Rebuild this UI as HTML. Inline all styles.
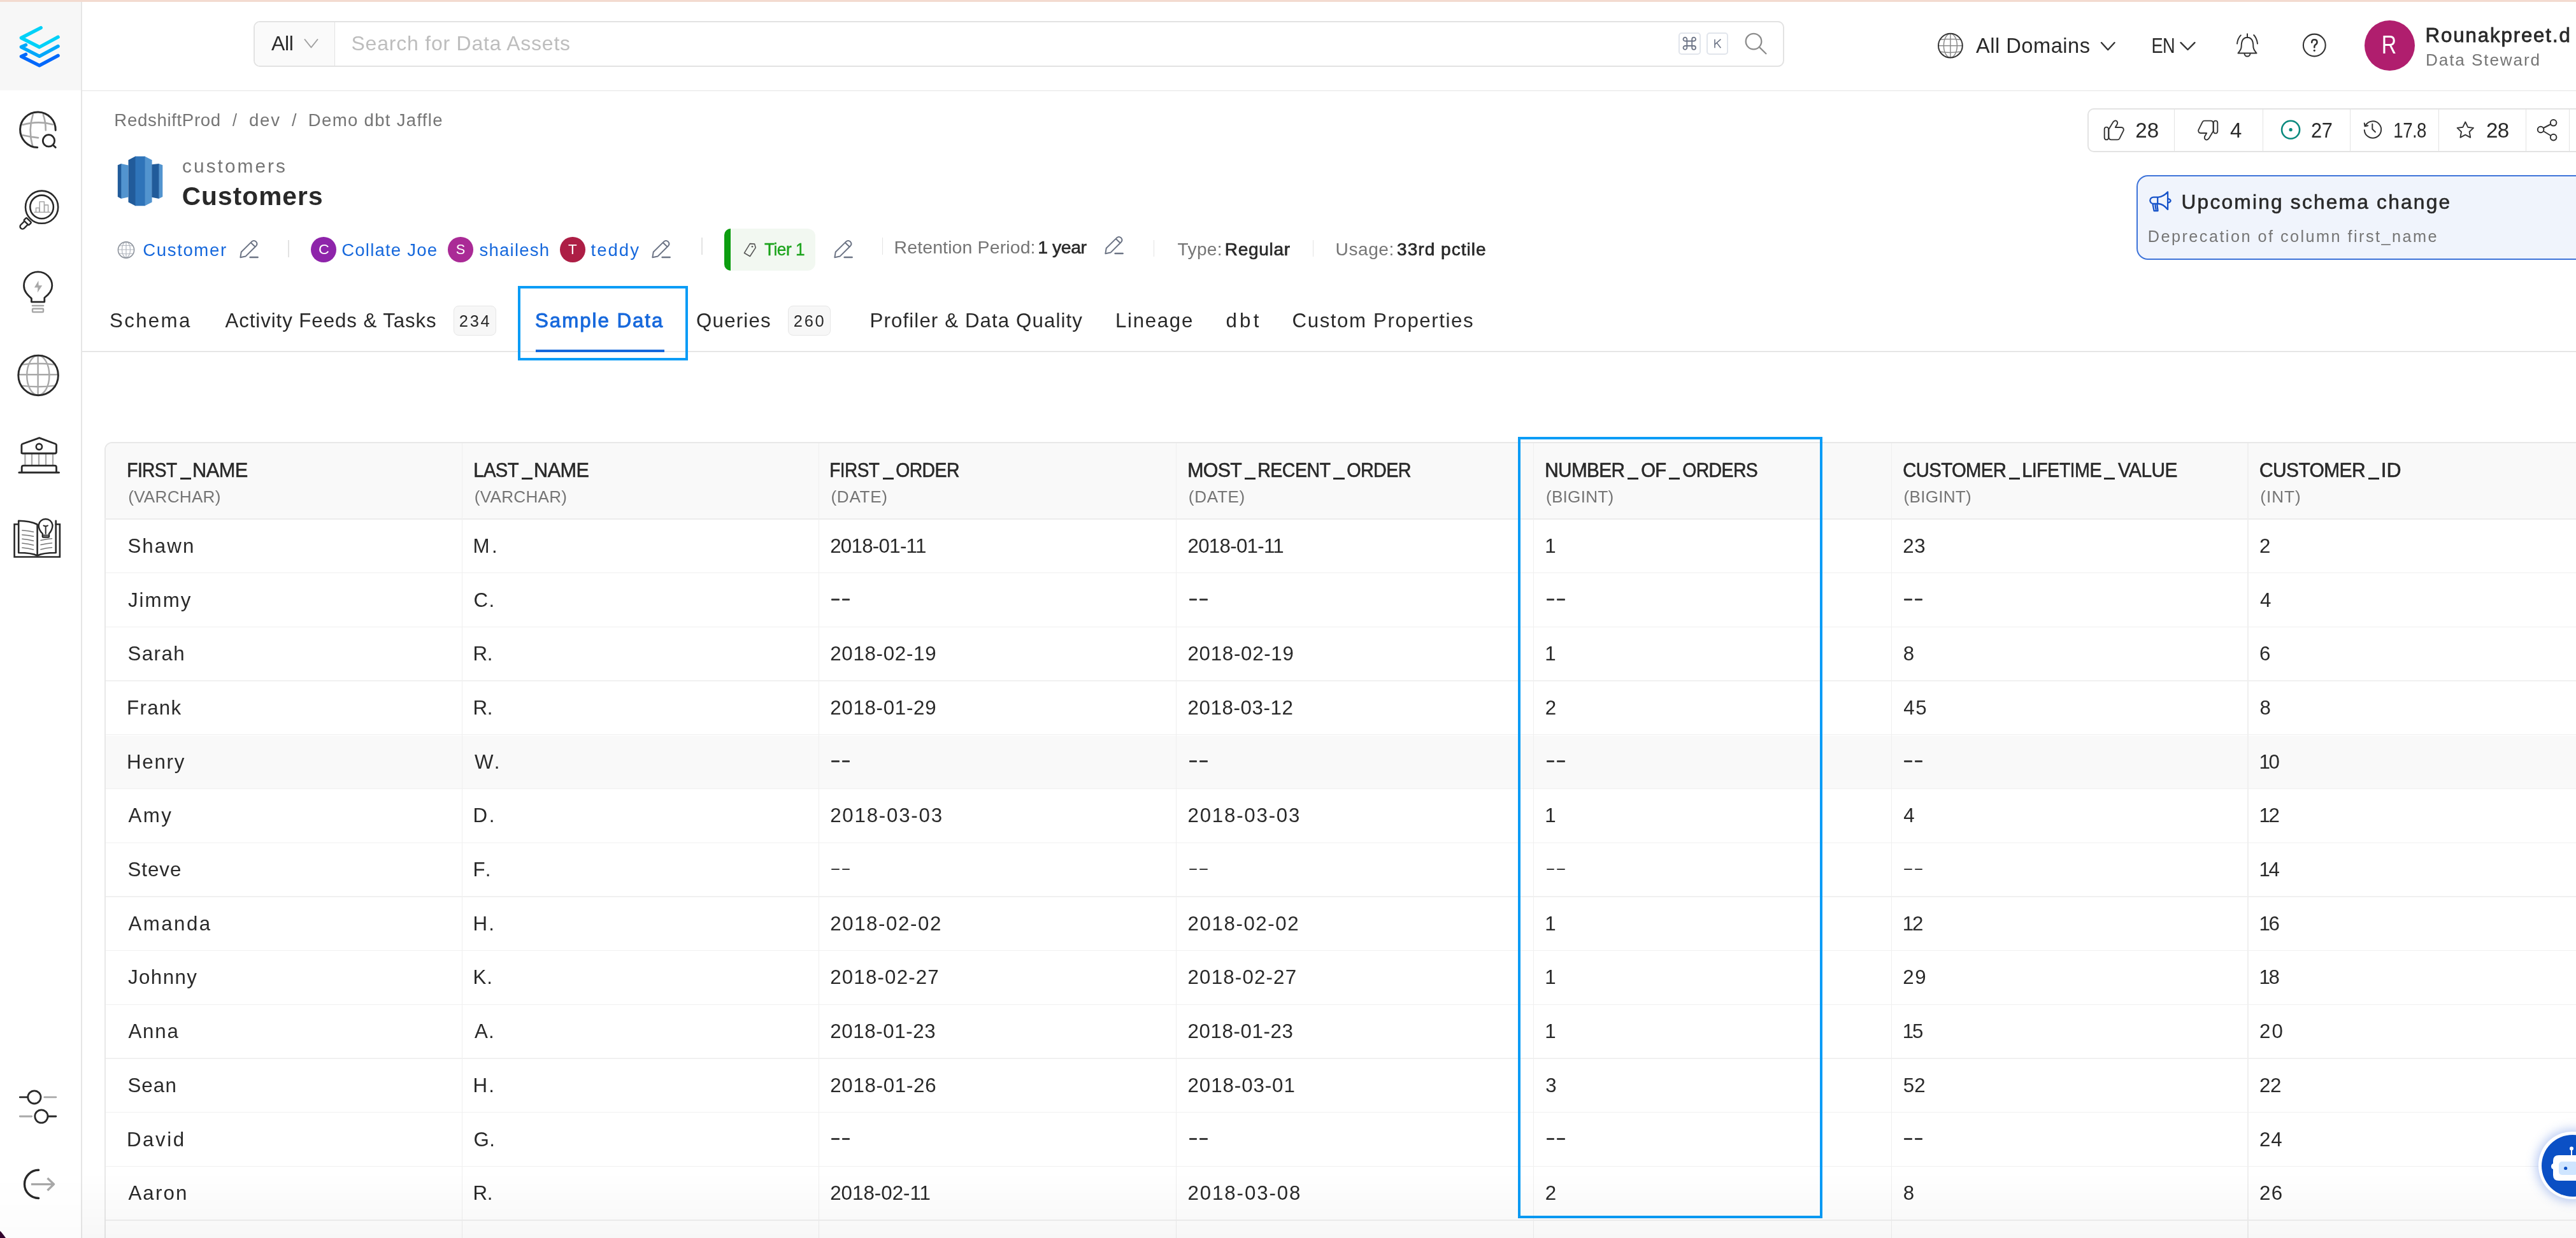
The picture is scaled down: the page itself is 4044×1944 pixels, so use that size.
<!DOCTYPE html>
<html><head><meta charset="utf-8"><style>
html,body{margin:0;padding:0;width:4044px;height:1944px;overflow:hidden;background:#fff}
body{position:relative;font-family:"Liberation Sans",sans-serif}
.t{position:absolute;white-space:nowrap;line-height:1;font-family:"Liberation Sans",sans-serif}
svg{position:absolute;overflow:visible}
</style></head><body>
<div style="position:absolute;left:0px;top:0px;width:4044px;height:3px;background:#f3dbd0"></div>
<div style="position:absolute;left:0px;top:3px;width:127px;height:139px;background:#f7f7f7"></div>
<div style="position:absolute;left:127px;top:3px;width:1.5px;height:1941px;background:#e6e6e6"></div>
<div style="position:absolute;left:128px;top:141.5px;width:3916px;height:1.5px;background:#e5e5e5"></div>
<div style="position:absolute;left:398px;top:32.5px;width:2402.5px;height:72.0px;box-sizing:border-box;border:2px solid #e2e2e2;border-radius:10px;background:#fff;overflow:hidden"></div>
<div style="position:absolute;left:400px;top:34.5px;width:125px;height:68.0px;background:#fafafa;border-radius:8px 0 0 8px"></div>
<div style="position:absolute;left:524.5px;top:34.5px;width:1.5px;height:68.0px;background:#e3e3e3"></div>
<div style="position:absolute;left:2635px;top:51.3px;width:34.5px;height:34.5px;box-sizing:border-box;border:2px solid #e1e5ec;border-radius:5px"></div>
<div style="position:absolute;left:2678.5px;top:51.3px;width:34.5px;height:34.5px;box-sizing:border-box;border:2px solid #e1e5ec;border-radius:5px"></div>
<div style="position:absolute;left:128px;top:551.3px;width:3916px;height:1.7000000000000455px;background:#e6e6e6"></div>
<div style="position:absolute;left:841px;top:548.8px;width:201.70000000000005px;height:4.400000000000091px;background:#1668dc"></div>
<div style="position:absolute;left:712px;top:480px;width:66.5px;height:46.5px;box-sizing:border-box;border:1.5px solid #e6e6e6;border-radius:8px;background:#f7f7f7"></div>
<div style="position:absolute;left:1236.6px;top:480px;width:67.70000000000005px;height:46.5px;box-sizing:border-box;border:1.5px solid #e6e6e6;border-radius:8px;background:#f7f7f7"></div>
<div style="position:absolute;left:812.8px;top:448.5px;width:267.4000000000001px;height:117.70000000000005px;box-sizing:border-box;border:4px solid #0a9cf6"></div>
<div style="position:absolute;left:452.2px;top:377px;width:1.5px;height:27px;background:#e3e3e3"></div>
<div style="position:absolute;left:1101px;top:372.5px;width:1.5px;height:27.0px;background:#e3e3e3"></div>
<div style="position:absolute;left:1384.5px;top:372.5px;width:1.5px;height:27.0px;background:#e3e3e3"></div>
<div style="position:absolute;left:1810.9px;top:376.6px;width:1.5px;height:26.399999999999977px;background:#e3e3e3"></div>
<div style="position:absolute;left:2060.5px;top:376.6px;width:1.5px;height:26.399999999999977px;background:#e3e3e3"></div>
<div style="position:absolute;left:488px;top:372px;width:40px;height:40px;border-radius:50%;background:#8e24aa"></div>
<div style="position:absolute;left:703px;top:372px;width:39.5px;height:39.5px;border-radius:50%;background:#aa2a96"></div>
<div style="position:absolute;left:879px;top:372px;width:39.5px;height:39.5px;border-radius:50%;background:#ad1e45"></div>
<div style="position:absolute;left:3712px;top:32.3px;width:79px;height:79.0px;border-radius:50%;background:#b01e6e"></div>
<div style="position:absolute;left:1137px;top:359px;width:143px;height:66px;border-radius:12px;background:#f2f8f1;overflow:hidden"></div>
<div style="position:absolute;left:1137px;top:359px;width:10px;height:66px;border-radius:12px 0 0 12px;background:#0c9d0f"></div>
<div style="position:absolute;left:3276.5px;top:169.8px;width:823.5px;height:68.79999999999998px;box-sizing:border-box;border:2px solid #e3e3e3;border-radius:10px"></div>
<div style="position:absolute;left:3412.85px;top:171px;width:1.5px;height:66.5px;background:#e3e3e3"></div>
<div style="position:absolute;left:3551.55px;top:171px;width:1.5px;height:66.5px;background:#e3e3e3"></div>
<div style="position:absolute;left:3688.75px;top:171px;width:1.5px;height:66.5px;background:#e3e3e3"></div>
<div style="position:absolute;left:3827.75px;top:171px;width:1.5px;height:66.5px;background:#e3e3e3"></div>
<div style="position:absolute;left:3964.55px;top:171px;width:1.5px;height:66.5px;background:#e3e3e3"></div>
<div style="position:absolute;left:4032.65px;top:171px;width:1.5px;height:66.5px;background:#e3e3e3"></div>
<div style="position:absolute;left:3353.5px;top:274.8px;width:746.5px;height:133.7px;box-sizing:border-box;border:2px solid #3d73d9;border-radius:18px;background:#f0f4fc"></div>
<div style="position:absolute;left:164.2px;top:693.9px;width:3955.8px;height:1296.1px;box-sizing:border-box;border:2px solid #e8e8e8;border-radius:12px;background:#fff;overflow:hidden"></div>
<div style="position:absolute;left:166px;top:695.8px;width:3954px;height:119.20000000000005px;background:#f9f9f9;border-top-left-radius:10px"></div>
<div style="position:absolute;left:164.2px;top:814.2px;width:3879.8px;height:1.599999999999909px;background:#ececec"></div>
<div style="position:absolute;left:166px;top:1154.6px;width:3878px;height:83.10000000000014px;background:#f9f9f9"></div>
<div style="position:absolute;left:166px;top:899.0px;width:3878px;height:1.400000000000091px;background:#f0f0f0"></div>
<div style="position:absolute;left:166px;top:983.6999999999999px;width:3878px;height:1.400000000000091px;background:#f0f0f0"></div>
<div style="position:absolute;left:166px;top:1068.3999999999999px;width:3878px;height:1.400000000000091px;background:#f0f0f0"></div>
<div style="position:absolute;left:166px;top:1153.1px;width:3878px;height:1.400000000000091px;background:#f0f0f0"></div>
<div style="position:absolute;left:166px;top:1237.8px;width:3878px;height:1.400000000000091px;background:#f0f0f0"></div>
<div style="position:absolute;left:166px;top:1322.5px;width:3878px;height:1.400000000000091px;background:#f0f0f0"></div>
<div style="position:absolute;left:166px;top:1407.2px;width:3878px;height:1.400000000000091px;background:#f0f0f0"></div>
<div style="position:absolute;left:166px;top:1491.8999999999999px;width:3878px;height:1.400000000000091px;background:#f0f0f0"></div>
<div style="position:absolute;left:166px;top:1576.6000000000001px;width:3878px;height:1.400000000000091px;background:#f0f0f0"></div>
<div style="position:absolute;left:166px;top:1661.3px;width:3878px;height:1.400000000000091px;background:#f0f0f0"></div>
<div style="position:absolute;left:166px;top:1746.0px;width:3878px;height:1.400000000000091px;background:#f0f0f0"></div>
<div style="position:absolute;left:166px;top:1830.7px;width:3878px;height:1.400000000000091px;background:#f0f0f0"></div>
<div style="position:absolute;left:166px;top:1915.4px;width:3878px;height:1.400000000000091px;background:#f0f0f0"></div>
<div style="position:absolute;left:166px;top:2000.1px;width:3878px;height:1.400000000000091px;background:#f0f0f0"></div>
<div style="position:absolute;left:724.8px;top:695.5px;width:1.400000000000091px;height:1248.5px;background:#efefef"></div>
<div style="position:absolute;left:1284.5px;top:695.5px;width:1.400000000000091px;height:1248.5px;background:#efefef"></div>
<div style="position:absolute;left:1845.8px;top:695.5px;width:1.400000000000091px;height:1248.5px;background:#efefef"></div>
<div style="position:absolute;left:2407.0px;top:695.5px;width:1.3999999999996362px;height:1248.5px;background:#efefef"></div>
<div style="position:absolute;left:2968.6000000000004px;top:695.5px;width:1.3999999999996362px;height:1248.5px;background:#efefef"></div>
<div style="position:absolute;left:3528.2000000000003px;top:695.5px;width:1.3999999999996362px;height:1248.5px;background:#efefef"></div>
<div style="position:absolute;left:2382.6px;top:685.5px;width:478.9000000000001px;height:1227.5px;box-sizing:border-box;border:4px solid #0a9cf6"></div>
<div style="position:absolute;left:282.59307742399193px;top:750.2px;width:17.23542728047289px;height:3.0px;background:#292929"></div>
<div style="position:absolute;left:818.7293838756873px;top:750.2px;width:17.16428787032885px;height:3.0px;background:#292929"></div>
<div style="position:absolute;left:1385.552040647348px;top:750.2px;width:17.163032998222434px;height:3.0px;background:#292929"></div>
<div style="position:absolute;left:1953.8673051707085px;top:750.2px;width:17.329810235385366px;height:3.0px;background:#292929"></div>
<div style="position:absolute;left:2093.284534606097px;top:750.2px;width:17.329810235385594px;height:3.0px;background:#292929"></div>
<div style="position:absolute;left:2554.7678911658923px;top:750.2px;width:17.263574211029663px;height:3.0px;background:#292929"></div>
<div style="position:absolute;left:2619.7852072857854px;top:750.2px;width:17.263574211029663px;height:3.0px;background:#292929"></div>
<div style="position:absolute;left:3154.1779581735195px;top:750.2px;width:17.129700967889676px;height:3.0px;background:#292929"></div>
<div style="position:absolute;left:3303.134892733727px;top:750.2px;width:17.129700967889676px;height:3.0px;background:#292929"></div>
<div style="position:absolute;left:3717.5867437357956px;top:750.2px;width:17.524211569261297px;height:3.0px;background:#292929"></div>
<div style="position:absolute;left:1305.2px;top:940.3px;width:12.5px;height:2.7000000000000455px;background:#3a3a3a;border-radius:1px"></div>
<div style="position:absolute;left:1321.7px;top:940.3px;width:12.5px;height:2.7000000000000455px;background:#3a3a3a;border-radius:1px"></div>
<div style="position:absolute;left:1866.5px;top:940.3px;width:12.5px;height:2.7000000000000455px;background:#3a3a3a;border-radius:1px"></div>
<div style="position:absolute;left:1883.0px;top:940.3px;width:12.5px;height:2.7000000000000455px;background:#3a3a3a;border-radius:1px"></div>
<div style="position:absolute;left:2427.7px;top:940.3px;width:12.5px;height:2.7000000000000455px;background:#3a3a3a;border-radius:1px"></div>
<div style="position:absolute;left:2444.2px;top:940.3px;width:12.5px;height:2.7000000000000455px;background:#3a3a3a;border-radius:1px"></div>
<div style="position:absolute;left:2989.3px;top:940.3px;width:12.5px;height:2.7000000000000455px;background:#3a3a3a;border-radius:1px"></div>
<div style="position:absolute;left:3005.8px;top:940.3px;width:12.5px;height:2.7000000000000455px;background:#3a3a3a;border-radius:1px"></div>
<div style="position:absolute;left:1305.2px;top:1194.3999999999999px;width:12.5px;height:2.7000000000000455px;background:#3a3a3a;border-radius:1px"></div>
<div style="position:absolute;left:1321.7px;top:1194.3999999999999px;width:12.5px;height:2.7000000000000455px;background:#3a3a3a;border-radius:1px"></div>
<div style="position:absolute;left:1866.5px;top:1194.3999999999999px;width:12.5px;height:2.7000000000000455px;background:#3a3a3a;border-radius:1px"></div>
<div style="position:absolute;left:1883.0px;top:1194.3999999999999px;width:12.5px;height:2.7000000000000455px;background:#3a3a3a;border-radius:1px"></div>
<div style="position:absolute;left:2427.7px;top:1194.3999999999999px;width:12.5px;height:2.7000000000000455px;background:#3a3a3a;border-radius:1px"></div>
<div style="position:absolute;left:2444.2px;top:1194.3999999999999px;width:12.5px;height:2.7000000000000455px;background:#3a3a3a;border-radius:1px"></div>
<div style="position:absolute;left:2989.3px;top:1194.3999999999999px;width:12.5px;height:2.7000000000000455px;background:#3a3a3a;border-radius:1px"></div>
<div style="position:absolute;left:3005.8px;top:1194.3999999999999px;width:12.5px;height:2.7000000000000455px;background:#3a3a3a;border-radius:1px"></div>
<div style="position:absolute;left:1305.2px;top:1363.8px;width:12.5px;height:2.7000000000000455px;background:#3a3a3a;border-radius:1px"></div>
<div style="position:absolute;left:1321.7px;top:1363.8px;width:12.5px;height:2.7000000000000455px;background:#3a3a3a;border-radius:1px"></div>
<div style="position:absolute;left:1866.5px;top:1363.8px;width:12.5px;height:2.7000000000000455px;background:#3a3a3a;border-radius:1px"></div>
<div style="position:absolute;left:1883.0px;top:1363.8px;width:12.5px;height:2.7000000000000455px;background:#3a3a3a;border-radius:1px"></div>
<div style="position:absolute;left:2427.7px;top:1363.8px;width:12.5px;height:2.7000000000000455px;background:#3a3a3a;border-radius:1px"></div>
<div style="position:absolute;left:2444.2px;top:1363.8px;width:12.5px;height:2.7000000000000455px;background:#3a3a3a;border-radius:1px"></div>
<div style="position:absolute;left:2989.3px;top:1363.8px;width:12.5px;height:2.7000000000000455px;background:#3a3a3a;border-radius:1px"></div>
<div style="position:absolute;left:3005.8px;top:1363.8px;width:12.5px;height:2.7000000000000455px;background:#3a3a3a;border-radius:1px"></div>
<div style="position:absolute;left:1305.2px;top:1787.3px;width:12.5px;height:2.7000000000000455px;background:#3a3a3a;border-radius:1px"></div>
<div style="position:absolute;left:1321.7px;top:1787.3px;width:12.5px;height:2.7000000000000455px;background:#3a3a3a;border-radius:1px"></div>
<div style="position:absolute;left:1866.5px;top:1787.3px;width:12.5px;height:2.7000000000000455px;background:#3a3a3a;border-radius:1px"></div>
<div style="position:absolute;left:1883.0px;top:1787.3px;width:12.5px;height:2.7000000000000455px;background:#3a3a3a;border-radius:1px"></div>
<div style="position:absolute;left:2427.7px;top:1787.3px;width:12.5px;height:2.7000000000000455px;background:#3a3a3a;border-radius:1px"></div>
<div style="position:absolute;left:2444.2px;top:1787.3px;width:12.5px;height:2.7000000000000455px;background:#3a3a3a;border-radius:1px"></div>
<div style="position:absolute;left:2989.3px;top:1787.3px;width:12.5px;height:2.7000000000000455px;background:#3a3a3a;border-radius:1px"></div>
<div style="position:absolute;left:3005.8px;top:1787.3px;width:12.5px;height:2.7000000000000455px;background:#3a3a3a;border-radius:1px"></div>
<svg style="left:20px;top:30px" width="85" height="85" viewBox="0 0 85 85" fill="none" stroke-linecap="round" stroke-linejoin="round"><polyline points="44.2,13.6 13.4,29.5 41.9,44 71.1,28.2" stroke="#00d1f8" stroke-width="5.4"/><polyline points="20.5,40.6 13.4,43.8 41.9,58.4 71.1,42.6" stroke="#00a7fa" stroke-width="5.4"/><polyline points="20.5,55.4 13.4,58.6 41.9,72.8 71.1,57.3" stroke="#0068fb" stroke-width="5.4"/></svg>
<svg style="left:20px;top:165px" width="80" height="80" viewBox="0 0 80 80" fill="none" stroke-linecap="round" stroke-linejoin="round"><path d="M15.5,31 Q40,24 62.7,30.4 M15.5,47.2 Q28,50 40,51.4 M31.7,14.9 Q24,39 31,64 M47.8,14.9 Q52,27 51.7,39.4" stroke="#a8a8a8" stroke-width="2.6"/><path d="M38.8,66.5 A27.8,27.8 0 1 1 67.2,39.4" stroke="#292929" stroke-width="3"/><circle cx="56.5" cy="55.9" r="9.2" stroke="#292929" stroke-width="2.8"/><path d="M63.5,63 L67.2,66.5" stroke="#292929" stroke-width="3"/></svg>
<svg style="left:20px;top:290px" width="80" height="80" viewBox="0 0 80 80" fill="none" stroke-linecap="round" stroke-linejoin="round"><circle cx="45.6" cy="35.2" r="25.6" stroke="#292929" stroke-width="2.6"/><circle cx="45.6" cy="34.9" r="18.3" stroke="#292929" stroke-width="2.6"/><path d="M36.5,43 V36.5 H41.7 V43 M42.2,43 V26.8 H49.4 V43 M49.8,43 V31.9 H55.6 V43 M33.9,43.3 H58.5" stroke="#a8a8a8" stroke-width="1.6"/><g transform="rotate(-45 19 62)"><rect x="10" y="58.2" width="16" height="7.6" rx="3.8" fill="#fff" stroke="#292929" stroke-width="2.4"/><rect x="22" y="56.5" width="6" height="11" rx="1.5" fill="#fff" stroke="#292929" stroke-width="2.4"/></g></svg>
<svg style="left:20px;top:415px" width="80" height="80" viewBox="0 0 80 80" fill="none" stroke-linecap="round" stroke-linejoin="round"><path d="M29.4,53.6 C23,48 17.5,42.5 17.5,33.5 A22,21.5 0 0 1 61.8,33.5 C61.8,42 56.5,47.5 49.8,52.5 L49.8,59.1 L29.4,59.1 Z" stroke="#292929" stroke-width="2.8"/><path d="M40.4,25.8 L33.9,36.5 L39.4,36.5 L38.8,44.6 L46.2,33.3 L40.6,33.3 Z" fill="#a8a8a8" stroke="none"/><path d="M31,65 H48" stroke="#a8a8a8" stroke-width="2.6"/><rect x="31" y="69.8" width="17" height="5.2" rx="1" stroke="#a8a8a8" stroke-width="2.4"/></svg>
<svg style="left:20px;top:550px" width="80" height="80" viewBox="0 0 80 80" fill="none" stroke-linecap="round" stroke-linejoin="round"><path d="M39.6,8.5 V70.5 M8.8,38.2 H71 M14,22.6 Q40,19 66,22.6 M14,55.6 Q40,59 66,55.6" stroke="#a8a8a8" stroke-width="2.4"/><ellipse cx="39.8" cy="39.4" rx="17.6" ry="31" stroke="#a8a8a8" stroke-width="2.4"/><circle cx="40.1" cy="39.4" r="31.3" stroke="#292929" stroke-width="2.9"/></svg>
<svg style="left:20px;top:675px" width="80" height="80" viewBox="0 0 80 80" fill="none" stroke-linecap="round" stroke-linejoin="round"><path d="M19.4,38.5 V54.3 M30,38.5 V54.3 M41,38.5 V54.3 M52,38.5 V54.3 M63,38.5 V54.3" stroke="#a8a8a8" stroke-width="2.3"/><path d="M13.9,36.5 V24 Q13.9,22.5 15.5,22 L41.7,12.6 L67,22 Q68.5,22.6 68.5,24 V34.5 Q68.5,37 66,37 H16 Q13.9,37 13.9,35 Z" stroke="#292929" stroke-width="2.8"/><circle cx="41.4" cy="26.5" r="4.6" stroke="#292929" stroke-width="2.6"/><path d="M14.2,66.5 V59 Q14.2,56.2 17,56.2 H65.8 Q68.5,56.2 68.5,59 V66.5" stroke="#292929" stroke-width="2.8"/><path d="M10,67 H72.4" stroke="#292929" stroke-width="3.2"/></svg>
<svg style="left:15px;top:800px" width="90" height="90" viewBox="0 0 90 90" fill="none" stroke-linecap="round" stroke-linejoin="round"><path d="M13.8,23.3 H7.6 V74.5 H78.9 V23.3 H72.7" stroke="#292929" stroke-width="2.6" stroke-linejoin="miter"/><path d="M43.6,72.5 Q35,68 14.2,68 V17.8 Q32,18 43.6,23.5 Z M43.6,72.5 Q52,68 72.7,68 V17.8" stroke="#292929" stroke-width="2.6"/><path d="M19.8,32.7 Q30,33.5 37.5,35.3 M19.8,39.7 Q30,40.5 37.5,42.3 M19.8,46.2 Q30,47 37.5,49.3 M19.8,53 Q30,54 37.5,56 M19.8,60 Q30,61 37.5,63 M49,48.5 Q58,46.5 66.5,45.8 M49,55.5 Q58,53.5 66.5,52.8 M49,62.7 Q58,60.5 66.5,59.8" stroke="#777" stroke-width="1.5"/><path d="M51.8,38 Q45.5,32 45.7,24.5 A11,11 0 0 1 67.5,24.5 Q67.5,32 62,38 V42.5 Q62,43.5 61,43.5 H52.8 Q51.8,43.5 51.8,42.5 Z" fill="#fff" stroke="#292929" stroke-width="2.4"/><path d="M53.5,25.3 Q56.7,27 60,25.3 M56.7,26.5 V38 M53.5,40.5 H60" stroke="#292929" stroke-width="2"/></svg>
<svg style="left:20px;top:1700px" width="80" height="80" viewBox="0 0 80 80" fill="none" stroke-linecap="round" stroke-linejoin="round"><path d="M49.8,22.9 H67.9 M11.3,53 H29.7" stroke="#a8a8a8" stroke-width="2.8"/><path d="M11.3,22.9 H23.7 M55.2,53 H67.9" stroke="#292929" stroke-width="2.8"/><circle cx="33.9" cy="22.9" r="10.1" stroke="#292929" stroke-width="2.8"/><circle cx="44.9" cy="53" r="10.1" stroke="#292929" stroke-width="2.8"/></svg>
<svg style="left:0px;top:1800px" width="100" height="100" viewBox="0 0 100 100" fill="none" stroke-linecap="round" stroke-linejoin="round"><path d="M60.6,37.3 A22.1,22.1 0 0 0 60.6,81.5" stroke="#292929" stroke-width="3.4"/><path d="M48.9,59.6 H84.5 M74.5,50 L84.5,59.6 L74.5,69.3" stroke="#a8a8a8" stroke-width="3.4" stroke-linecap="butt"/></svg>
<svg style="left:470px;top:55px" width="40" height="30" viewBox="0 0 40 30" fill="none" stroke-linecap="round" stroke-linejoin="round"><path d="M8.5,7 L18.5,19.5 L28.5,7" stroke="#a0a0a0" stroke-width="2"/></svg>
<svg style="left:2635px;top:51.3px" width="34.5" height="34.5" viewBox="0 0 34.5 34.5" fill="none" stroke-linecap="round" stroke-linejoin="round"><path d="M13.3,13.5 V21 M21.2,13.5 V21 M13.3,13.5 H21.2 M13.3,21 H21.2 M13.3,13.5 H10.5 A2.9,2.9 0 1 1 13.3,10.6 Z M21.2,13.5 V10.6 A2.9,2.9 0 1 1 24.1,13.5 Z M13.3,21 V23.9 A2.9,2.9 0 1 1 10.5,21 Z M21.2,21 H24.1 A2.9,2.9 0 1 1 21.2,23.9 Z" stroke="#6b7385" stroke-width="1.8"/></svg>
<svg style="left:2678.5px;top:51.3px" width="34.5" height="34.5" viewBox="0 0 34.5 34.5" fill="none" stroke-linecap="round" stroke-linejoin="round"><path d="M13,10.7 V24.2 M22.4,10.7 L13.3,18.6 M16.3,16.5 L22.4,24.2" stroke="#6b7385" stroke-width="1.6" stroke-linecap="butt"/></svg>
<svg style="left:2730px;top:45px" width="50" height="50" viewBox="0 0 50 50" fill="none" stroke-linecap="round" stroke-linejoin="round"><circle cx="23" cy="20.1" r="12.3" stroke="#8c8c8c" stroke-width="2.3"/><path d="M31.8,28.9 L42.4,39.2" stroke="#8c8c8c" stroke-width="2.3"/></svg>
<svg style="left:3040px;top:50px" width="44" height="44" viewBox="0 0 44 44" fill="none" stroke-linecap="round" stroke-linejoin="round"><path d="M21.9,3 V40.5 M3.5,21.7 H40.5 M6.5,12.3 Q22,10 37.5,12.3 M6.5,31.3 Q22,33.5 37.5,31.3" stroke="#8a8a8a" stroke-width="1.5"/><ellipse cx="21.9" cy="21.7" rx="10.5" ry="18.7" stroke="#8a8a8a" stroke-width="1.5"/><circle cx="21.9" cy="21.7" r="18.9" stroke="#333" stroke-width="2"/></svg>
<svg style="left:3290px;top:60px" width="40" height="25" viewBox="0 0 40 25" fill="none" stroke-linecap="round" stroke-linejoin="round"><path d="M9,7 L19.2,18.2 L29.5,7" stroke="#333" stroke-width="2.4"/></svg>
<svg style="left:3415px;top:60px" width="40" height="25" viewBox="0 0 40 25" fill="none" stroke-linecap="round" stroke-linejoin="round"><path d="M8.5,6.9 L19.5,18 L30.5,6.9" stroke="#333" stroke-width="2.4"/></svg>
<svg style="left:3500px;top:45px" width="60" height="55" viewBox="0 0 60 55" fill="none" stroke-linecap="round" stroke-linejoin="round"><path d="M28,13.8 C21,14 18.7,19.5 18.7,27.6 C18.7,33 16,35.5 13.5,38.4 H42.5 C40,35.5 37.3,33 37.3,27.6 C37.3,19.5 35,14 28,13.8 Z M28,8.2 V13.3 M23.5,39 A4.5,4.5 0 0 0 32.5,39 M17.8,10.4 Q13,15 12,23.6 M38.2,10 Q43,15 44,23.6" stroke="#333" stroke-width="2"/></svg>
<svg style="left:3610px;top:48px" width="45" height="45" viewBox="0 0 45 45" fill="none" stroke-linecap="round" stroke-linejoin="round"><circle cx="23.3" cy="23" r="17.4" stroke="#333" stroke-width="2.1"/><path d="M19.2,18.8 Q19.2,14.2 23.3,14.2 Q27.5,14.2 27.5,18.3 Q27.5,21 24.8,22.3 Q23.3,23.2 23.3,25.5 V26.5" stroke="#333" stroke-width="2.6"/><circle cx="23.3" cy="31.3" r="1.6" fill="#333" stroke="none"/></svg>
<svg style="left:175px;top:240px" width="90" height="90" viewBox="0 0 90 90" fill="none" stroke-linecap="round" stroke-linejoin="round"><path d="M14.9,17.1 L26.5,19.6 V69.4 L14.9,72 Z" fill="#5294cf"/><path d="M9.8,19.3 L15.3,17.1 V72 L9.8,69 Z" fill="#215b9a"/><path d="M52.3,5.5 L63.6,11.3 V77.4 L52.3,83.2 Z" fill="#5294cf"/><path d="M37,5.5 H52.8 V83.2 H37 Z" fill="#2f74b9"/><path d="M26.5,11.3 L37.5,5.5 V83.2 L26.5,77.4 Z" fill="#215b9a"/><path d="M74.2,17.1 L80.3,19.3 V69 L74.2,72 Z" fill="#5294cf"/><path d="M63.3,18.2 L74.6,17.1 V72 L63.3,69.8 Z" fill="#215b9a"/></svg>
<svg style="left:182px;top:376px" width="32" height="32" viewBox="0 0 32 32" fill="none" stroke-linecap="round" stroke-linejoin="round"><path d="M16,4 V28 M4,16 H28 M6,10 Q16,8.5 26,10 M6,22 Q16,23.5 26,22" stroke="#b0b5bd" stroke-width="1.2"/><ellipse cx="16" cy="16" rx="6.5" ry="12.3" stroke="#b0b5bd" stroke-width="1.2"/><circle cx="16" cy="16.5" r="12.6" stroke="#8d939c" stroke-width="1.6"/></svg>
<svg style="left:370px;top:370px" width="40" height="40" viewBox="0 0 40 40" fill="none" stroke-linecap="round" stroke-linejoin="round"><path d="M7.4,34.2 L8.7,25.8 L25,9.6 Q28.5,6.5 32,9.6 Q35,12.8 32,16.2 L15.5,32.6 Z M23.8,11 L30.5,17.5" stroke="#6b7384" stroke-width="2"/><path d="M22.6,34.1 H34.6" stroke="#6b7384" stroke-width="2.5"/></svg>
<svg style="left:1016.5px;top:369.5px" width="40" height="40" viewBox="0 0 40 40" fill="none" stroke-linecap="round" stroke-linejoin="round"><path d="M7.4,34.2 L8.7,25.8 L25,9.6 Q28.5,6.5 32,9.6 Q35,12.8 32,16.2 L15.5,32.6 Z M23.8,11 L30.5,17.5" stroke="#6b7384" stroke-width="2"/><path d="M22.6,34.1 H34.6" stroke="#6b7384" stroke-width="2.5"/></svg>
<svg style="left:1302.5px;top:369.5px" width="40" height="40" viewBox="0 0 40 40" fill="none" stroke-linecap="round" stroke-linejoin="round"><path d="M7.4,34.2 L8.7,25.8 L25,9.6 Q28.5,6.5 32,9.6 Q35,12.8 32,16.2 L15.5,32.6 Z M23.8,11 L30.5,17.5" stroke="#6b7384" stroke-width="2"/><path d="M22.6,34.1 H34.6" stroke="#6b7384" stroke-width="2.5"/></svg>
<svg style="left:1728px;top:363.5px" width="40" height="40" viewBox="0 0 40 40" fill="none" stroke-linecap="round" stroke-linejoin="round"><path d="M7.4,34.2 L8.7,25.8 L25,9.6 Q28.5,6.5 32,9.6 Q35,12.8 32,16.2 L15.5,32.6 Z M23.8,11 L30.5,17.5" stroke="#6b7384" stroke-width="2"/><path d="M22.6,34.1 H34.6" stroke="#6b7384" stroke-width="2.5"/></svg>
<svg style="left:1160px;top:365px" width="40" height="40" viewBox="0 0 40 40" fill="none" stroke-linecap="round" stroke-linejoin="round"><path d="M8.4,32.3 L17.4,37.5 L26.2,23.9 L24.6,18.1 L17.4,17.6 L14.5,22.3 Z" stroke="#555" stroke-width="1.6"/><circle cx="21" cy="22.3" r="1.3" fill="#555" stroke="none"/></svg>
<svg style="left:3295px;top:180px" width="50" height="50" viewBox="0 0 50 50" fill="none" stroke-linecap="round" stroke-linejoin="round"><rect x="8.7" y="19.6" width="6.4" height="19.8" rx="3.2" stroke="#333" stroke-width="1.9"/><path d="M15.5,23 L22.6,11.3 Q25.5,8 28.3,10.5 Q29.8,12 29,14.5 L25.8,20 H35.1 Q39.3,20.5 38.8,24.6 L32.3,37.6 Q31.3,39.4 29,39.4 H19.5 Q15.5,39.4 15.5,35 Z" stroke="#333" stroke-width="1.9"/></svg>
<svg style="left:3440px;top:180px" width="50" height="50" viewBox="0 0 50 50" fill="none" stroke-linecap="round" stroke-linejoin="round"><g transform="rotate(180 25 24.5)"><rect x="8.7" y="19.6" width="6.4" height="19.8" rx="3.2" stroke="#333" stroke-width="1.9"/><path d="M15.5,23 L22.6,11.3 Q25.5,8 28.3,10.5 Q29.8,12 29,14.5 L25.8,20 H35.1 Q39.3,20.5 38.8,24.6 L32.3,37.6 Q31.3,39.4 29,39.4 H19.5 Q15.5,39.4 15.5,35 Z" stroke="#333" stroke-width="1.9"/></g></svg>
<svg style="left:3575px;top:183px" width="42" height="42" viewBox="0 0 42 42" fill="none" stroke-linecap="round" stroke-linejoin="round"><circle cx="21.1" cy="20.7" r="14" stroke="#0b8a7e" stroke-width="2.6"/><circle cx="21.1" cy="20.7" r="2.6" fill="#0b8a7e" stroke="none"/></svg>
<svg style="left:3705px;top:185px" width="40" height="40" viewBox="0 0 40 40" fill="none" stroke-linecap="round" stroke-linejoin="round"><path d="M8.5,12 A13.2,13.2 0 1 1 6.8,19.2" stroke="#333" stroke-width="2"/><path d="M6.8,8.6 L7.6,13.3 L12.3,12.3" stroke="#333" stroke-width="2"/><path d="M19.3,9.8 V17.7 L23.9,22.3" stroke="#333" stroke-width="2"/></svg>
<svg style="left:3850px;top:185px" width="40" height="40" viewBox="0 0 40 40" fill="none" stroke-linecap="round" stroke-linejoin="round"><path d="M20.3,6.5 L24.2,14.7 L33,15.9 L26.6,22 L28.2,30.8 L20.3,26.6 L12.4,30.8 L14,22 L7.6,15.9 L16.4,14.7 Z" stroke="#333" stroke-width="1.9"/></svg>
<svg style="left:3978px;top:182px" width="44" height="44" viewBox="0 0 44 44" fill="none" stroke-linecap="round" stroke-linejoin="round"><circle cx="30.6" cy="10.8" r="4.8" stroke="#333" stroke-width="2"/><circle cx="30.6" cy="33.6" r="4.8" stroke="#333" stroke-width="2"/><circle cx="10.6" cy="21.5" r="4.8" stroke="#333" stroke-width="2"/><path d="M14.9,19 L26.4,13 M14.9,24 L26.4,31" stroke="#333" stroke-width="2"/></svg>
<svg style="left:3366px;top:294px" width="50" height="46" viewBox="0 0 50 46" fill="none" stroke-linecap="round" stroke-linejoin="round"><path d="M22.3,15.6 H14.9 A5.6,5.2 0 0 0 14.9,26 H23 Q30,26.5 37.1,34.9 V7.4 Q30,15 22.3,15.6 Z M21.2,16 V25.5 M37.5,17.8 Q41.6,19.5 41.6,21.2 Q41.6,23 37.5,24.5 M13.6,26.7 L15.6,37.1 H21.6 L20.4,26.7 M17.5,28 L18.6,35" stroke="#1753c9" stroke-width="2.3"/></svg>
<div style="position:absolute;left:3985px;top:1777px;width:106px;height:106px;border-radius:50%;background:#fff;box-shadow:0 0 16px 4px rgba(60,110,220,0.35)"></div>
<div style="position:absolute;left:3989.5px;top:1781.5px;width:97px;height:97px;border-radius:50%;background:#0b50c5"></div>
<svg style="left:3990px;top:1790px" width="54" height="90" viewBox="0 0 54 90" fill="none" stroke-linecap="round" stroke-linejoin="round"><circle cx="47" cy="13.5" r="3" fill="#fff"/><path d="M47,14 V25" stroke="#fff" stroke-width="2"/><path d="M54,24 H27 Q18,24 18,33 V37 Q15,38 15,41.5 Q15,45 18,46 V55 Q18,64 27,64 H54 Z" fill="#fff"/><rect x="27" y="34" width="30" height="21" rx="5" fill="#cfe5ff"/><circle cx="37.7" cy="44.5" r="2.6" fill="#0b50c5"/></svg>
<svg style="left:0px;top:1928px" width="16" height="16" viewBox="0 0 16 16" fill="none" stroke-linecap="round" stroke-linejoin="round"><path d="M0,5 Q2,6 9,16 H0 Z" fill="#33062f"/></svg>
<div style="position:absolute;left:0;top:0;width:4044px;height:1944px;will-change:transform">
<div class="t" style="left:426.0px;top:51.9px;font-size:31.98px;color:#292929;letter-spacing:-0.31px">All</div>
<div class="t" style="left:551.5px;top:51.9px;font-size:31.98px;color:#bdbdbd;letter-spacing:0.79px">Search for Data Assets</div>
<div class="t" style="left:3102.0px;top:55.7px;font-size:32.70px;color:#292929;letter-spacing:0.46px">All Domains</div>
<div class="t" style="left:3377.1px;top:55.7px;font-size:32.70px;color:#292929;letter-spacing:-0.65px;transform:scaleX(0.832);transform-origin:2.6px 0">EN</div>
<div class="t" style="left:3807.6px;top:39.7px;font-size:31.25px;color:#292929;letter-spacing:1.85px;-webkit-text-stroke:0.8px #292929">Rounakpreet.d</div>
<div class="t" style="left:3808.0px;top:81.3px;font-size:26.16px;color:#757575;letter-spacing:1.88px">Data Steward</div>
<div class="t" style="left:3738.4px;top:50.0px;font-size:40.70px;color:#ffffff;letter-spacing:0.00px;transform:scaleX(0.798);transform-origin:3.2px 0">R</div>
<div class="t" style="left:179.3px;top:175.1px;font-size:27.62px;color:#757575;letter-spacing:0.66px">RedshiftProd</div>
<div class="t" style="left:364.9px;top:175.1px;font-size:27.62px;color:#757575;letter-spacing:0.00px;transform:scaleX(0.914);transform-origin:-0.0px 0">/</div>
<div class="t" style="left:390.9px;top:175.1px;font-size:27.62px;color:#757575;letter-spacing:1.87px">dev</div>
<div class="t" style="left:458.2px;top:175.1px;font-size:27.62px;color:#757575;letter-spacing:0.00px;transform:scaleX(0.978);transform-origin:-0.0px 0">/</div>
<div class="t" style="left:483.8px;top:175.1px;font-size:27.62px;color:#757575;letter-spacing:1.28px">Demo dbt Jaffle</div>
<div class="t" style="left:286.1px;top:245.8px;font-size:29.80px;color:#757575;letter-spacing:3.05px">customers</div>
<div class="t" style="left:285.7px;top:288.0px;font-size:40.70px;color:#292929;letter-spacing:1.04px;font-weight:bold">Customers</div>
<div class="t" style="left:224.3px;top:378.6px;font-size:27.62px;color:#1668dc;letter-spacing:1.59px">Customer</div>
<div class="t" style="left:536.2px;top:378.6px;font-size:27.62px;color:#1668dc;letter-spacing:1.18px">Collate Joe</div>
<div class="t" style="left:752.6px;top:378.6px;font-size:27.62px;color:#1668dc;letter-spacing:1.17px">shailesh</div>
<div class="t" style="left:927.6px;top:378.6px;font-size:27.62px;color:#1668dc;letter-spacing:1.96px">teddy</div>
<div class="t" style="left:499.5px;top:381.0px;font-size:21.80px;color:#ffffff;letter-spacing:0.00px;transform:scaleX(1.074);transform-origin:1.0px 0">C</div>
<div class="t" style="left:715.8px;top:381.0px;font-size:21.80px;color:#ffffff;letter-spacing:0.00px">S</div>
<div class="t" style="left:892.2px;top:381.0px;font-size:21.80px;color:#ffffff;letter-spacing:0.00px;transform:scaleX(1.031);transform-origin:0.3px 0">T</div>
<div class="t" style="left:1200.1px;top:378.3px;font-size:28.05px;color:#1ba31b;letter-spacing:-0.56px;transform:scaleX(0.935);transform-origin:0.4px 0;-webkit-text-stroke:0.4px #1ba31b">Tier 1</div>
<div class="t" style="left:1403.5px;top:373.5px;font-size:28.49px;color:#757575;letter-spacing:0.12px">Retention Period:</div>
<div class="t" style="left:1629.2px;top:373.5px;font-size:28.49px;color:#292929;letter-spacing:-0.45px;-webkit-text-stroke:0.6px #292929">1 year</div>
<div class="t" style="left:1848.6px;top:378.0px;font-size:28.05px;color:#757575;letter-spacing:0.34px">Type:</div>
<div class="t" style="left:1922.8px;top:378.0px;font-size:28.05px;color:#292929;letter-spacing:0.68px;-webkit-text-stroke:0.7px #292929">Regular</div>
<div class="t" style="left:2096.6px;top:378.0px;font-size:28.05px;color:#757575;letter-spacing:0.56px">Usage:</div>
<div class="t" style="left:2193.1px;top:378.0px;font-size:28.05px;color:#292929;letter-spacing:1.02px;-webkit-text-stroke:0.7px #292929">33rd pctile</div>
<div class="t" style="left:172.0px;top:488.0px;font-size:31.25px;color:#292929;letter-spacing:2.33px">Schema</div>
<div class="t" style="left:353.4px;top:488.0px;font-size:31.25px;color:#292929;letter-spacing:0.92px">Activity Feeds &amp; Tasks</div>
<div class="t" style="left:720.8px;top:491.5px;font-size:25.44px;color:#292929;letter-spacing:2.69px">234</div>
<div class="t" style="left:840.0px;top:488.0px;font-size:31.25px;color:#1668dc;letter-spacing:1.97px;-webkit-text-stroke:0.9px #1668dc">Sample Data</div>
<div class="t" style="left:1093.1px;top:488.0px;font-size:31.25px;color:#292929;letter-spacing:1.20px">Queries</div>
<div class="t" style="left:1245.8px;top:491.5px;font-size:25.44px;color:#292929;letter-spacing:2.69px">260</div>
<div class="t" style="left:1365.6px;top:488.0px;font-size:31.25px;color:#292929;letter-spacing:1.10px">Profiler &amp; Data Quality</div>
<div class="t" style="left:1751.0px;top:488.0px;font-size:31.25px;color:#292929;letter-spacing:1.68px">Lineage</div>
<div class="t" style="left:1924.4px;top:488.0px;font-size:31.25px;color:#292929;letter-spacing:4.31px">dbt</div>
<div class="t" style="left:2028.5px;top:488.0px;font-size:31.25px;color:#292929;letter-spacing:1.59px">Custom Properties</div>
<div class="t" style="left:3352.2px;top:188.1px;font-size:33.14px;color:#292929;letter-spacing:0.24px">28</div>
<div class="t" style="left:3500.5px;top:188.1px;font-size:33.14px;color:#292929;letter-spacing:0.00px;transform:scaleX(0.995);transform-origin:0.5px 0">4</div>
<div class="t" style="left:3628.4px;top:188.1px;font-size:33.14px;color:#292929;letter-spacing:-0.66px;transform:scaleX(0.931);transform-origin:1.6px 0">27</div>
<div class="t" style="left:3756.9px;top:188.1px;font-size:33.14px;color:#292929;letter-spacing:-0.66px;transform:scaleX(0.834);transform-origin:2.1px 0">17.8</div>
<div class="t" style="left:3902.9px;top:188.1px;font-size:33.14px;color:#292929;letter-spacing:-0.46px">28</div>
<div class="t" style="left:3424.5px;top:301.7px;font-size:31.69px;color:#292929;letter-spacing:2.21px;-webkit-text-stroke:0.6px #292929">Upcoming schema change</div>
<div class="t" style="left:3371.7px;top:359.3px;font-size:25.29px;color:#757575;letter-spacing:2.45px">Deprecation of column first_name</div>
<div class="t" style="left:198.9px;top:722.1px;font-size:31.98px;color:#292929;letter-spacing:-0.64px;transform:scaleX(0.878);transform-origin:2.5px 0;-webkit-text-stroke:0.6px #292929">FIRST</div>
<div class="t" style="left:302.3px;top:722.1px;font-size:31.98px;color:#292929;letter-spacing:-0.64px;transform:scaleX(0.963);transform-origin:2.5px 0;-webkit-text-stroke:0.6px #292929">NAME</div>
<div class="t" style="left:201.2px;top:766.6px;font-size:26.16px;color:#757575;letter-spacing:0.23px">(VARCHAR)</div>
<div class="t" style="left:742.5px;top:722.1px;font-size:31.98px;color:#292929;letter-spacing:-0.64px;transform:scaleX(0.916);transform-origin:2.5px 0;-webkit-text-stroke:0.6px #292929">LAST</div>
<div class="t" style="left:838.4px;top:722.1px;font-size:31.98px;color:#292929;letter-spacing:-0.64px;transform:scaleX(0.959);transform-origin:2.5px 0;-webkit-text-stroke:0.6px #292929">NAME</div>
<div class="t" style="left:744.8px;top:766.6px;font-size:26.16px;color:#757575;letter-spacing:0.23px">(VARCHAR)</div>
<div class="t" style="left:1302.2px;top:722.1px;font-size:31.98px;color:#292929;letter-spacing:-0.64px;transform:scaleX(0.874);transform-origin:2.5px 0;-webkit-text-stroke:0.6px #292929">FIRST</div>
<div class="t" style="left:1406.2px;top:722.1px;font-size:31.98px;color:#292929;letter-spacing:-0.64px;transform:scaleX(0.888);transform-origin:1.5px 0;-webkit-text-stroke:0.6px #292929">ORDER</div>
<div class="t" style="left:1304.5px;top:766.6px;font-size:26.16px;color:#757575;letter-spacing:0.66px">(DATE)</div>
<div class="t" style="left:1863.5px;top:722.1px;font-size:31.98px;color:#292929;letter-spacing:-0.64px;transform:scaleX(0.948);transform-origin:2.5px 0;-webkit-text-stroke:0.6px #292929">MOST</div>
<div class="t" style="left:1973.7px;top:722.1px;font-size:31.98px;color:#292929;letter-spacing:-0.64px;transform:scaleX(0.894);transform-origin:2.5px 0;-webkit-text-stroke:0.6px #292929">RECENT</div>
<div class="t" style="left:2114.2px;top:722.1px;font-size:31.98px;color:#292929;letter-spacing:-0.64px;transform:scaleX(0.897);transform-origin:1.5px 0;-webkit-text-stroke:0.6px #292929">ORDER</div>
<div class="t" style="left:1865.8px;top:766.6px;font-size:26.16px;color:#757575;letter-spacing:0.66px">(DATE)</div>
<div class="t" style="left:2424.7px;top:722.1px;font-size:31.98px;color:#292929;letter-spacing:-0.64px;transform:scaleX(0.930);transform-origin:2.5px 0;-webkit-text-stroke:0.6px #292929">NUMBER</div>
<div class="t" style="left:2575.6px;top:722.1px;font-size:31.98px;color:#292929;letter-spacing:-0.64px;transform:scaleX(0.915);transform-origin:1.5px 0;-webkit-text-stroke:0.6px #292929">OF</div>
<div class="t" style="left:2640.6px;top:722.1px;font-size:31.98px;color:#292929;letter-spacing:-0.64px;transform:scaleX(0.888);transform-origin:1.5px 0;-webkit-text-stroke:0.6px #292929">ORDERS</div>
<div class="t" style="left:2427.0px;top:766.6px;font-size:26.16px;color:#757575;letter-spacing:0.22px">(BIGINT)</div>
<div class="t" style="left:2987.3px;top:722.1px;font-size:31.98px;color:#292929;letter-spacing:-0.64px;transform:scaleX(0.915);transform-origin:1.5px 0;-webkit-text-stroke:0.6px #292929">CUSTOMER</div>
<div class="t" style="left:3173.8px;top:722.1px;font-size:31.98px;color:#292929;letter-spacing:-0.64px;transform:scaleX(0.899);transform-origin:2.5px 0;-webkit-text-stroke:0.6px #292929">LIFETIME</div>
<div class="t" style="left:3325.2px;top:722.1px;font-size:31.98px;color:#292929;letter-spacing:-0.64px;transform:scaleX(0.935);transform-origin:-0.0px 0;-webkit-text-stroke:0.6px #292929">VALUE</div>
<div class="t" style="left:2988.6px;top:766.6px;font-size:26.16px;color:#757575;letter-spacing:0.22px">(BIGINT)</div>
<div class="t" style="left:3546.9px;top:722.1px;font-size:31.98px;color:#292929;letter-spacing:-0.64px;transform:scaleX(0.936);transform-origin:1.5px 0;-webkit-text-stroke:0.6px #292929">CUSTOMER</div>
<div class="t" style="left:3737.7px;top:722.1px;font-size:31.98px;color:#292929;letter-spacing:-0.18px;-webkit-text-stroke:0.6px #292929">ID</div>
<div class="t" style="left:3548.2px;top:766.6px;font-size:26.16px;color:#757575;letter-spacing:1.00px">(INT)</div>
<div class="t" style="left:200.4px;top:841.8px;font-size:31.25px;color:#292929;letter-spacing:2.08px">Shawn</div>
<div class="t" style="left:742.6px;top:841.8px;font-size:31.25px;color:#292929;letter-spacing:3.39px">M.</div>
<div class="t" style="left:1303.2px;top:841.8px;font-size:31.25px;color:#292929;letter-spacing:-0.71px">2018-01-11</div>
<div class="t" style="left:1864.5px;top:841.8px;font-size:31.25px;color:#292929;letter-spacing:-0.71px">2018-01-11</div>
<div class="t" style="left:2425.2px;top:841.8px;font-size:31.25px;color:#292929;letter-spacing:0.00px">1</div>
<div class="t" style="left:2987.3px;top:841.8px;font-size:31.25px;color:#292929;letter-spacing:0.46px">23</div>
<div class="t" style="left:3546.9px;top:841.8px;font-size:31.25px;color:#292929;letter-spacing:0.00px">2</div>
<div class="t" style="left:200.9px;top:926.5px;font-size:31.25px;color:#292929;letter-spacing:2.08px">Jimmy</div>
<div class="t" style="left:743.5px;top:926.5px;font-size:31.25px;color:#292929;letter-spacing:1.45px">C.</div>
<div class="t" style="left:3547.9px;top:926.5px;font-size:31.25px;color:#292929;letter-spacing:0.00px">4</div>
<div class="t" style="left:200.4px;top:1011.2px;font-size:31.25px;color:#292929;letter-spacing:1.47px">Sarah</div>
<div class="t" style="left:742.6px;top:1011.2px;font-size:31.25px;color:#292929;letter-spacing:-0.49px">R.</div>
<div class="t" style="left:1303.2px;top:1011.2px;font-size:31.25px;color:#292929;letter-spacing:0.72px">2018-02-19</div>
<div class="t" style="left:1864.5px;top:1011.2px;font-size:31.25px;color:#292929;letter-spacing:0.72px">2018-02-19</div>
<div class="t" style="left:2425.2px;top:1011.2px;font-size:31.25px;color:#292929;letter-spacing:0.00px">1</div>
<div class="t" style="left:2987.8px;top:1011.2px;font-size:31.25px;color:#292929;letter-spacing:0.00px">8</div>
<div class="t" style="left:3546.9px;top:1011.2px;font-size:31.25px;color:#292929;letter-spacing:0.00px">6</div>
<div class="t" style="left:199.0px;top:1095.9px;font-size:31.25px;color:#292929;letter-spacing:1.32px">Frank</div>
<div class="t" style="left:742.6px;top:1095.9px;font-size:31.25px;color:#292929;letter-spacing:-0.49px">R.</div>
<div class="t" style="left:1303.2px;top:1095.9px;font-size:31.25px;color:#292929;letter-spacing:0.72px">2018-01-29</div>
<div class="t" style="left:1864.5px;top:1095.9px;font-size:31.25px;color:#292929;letter-spacing:0.61px">2018-03-12</div>
<div class="t" style="left:2425.7px;top:1095.9px;font-size:31.25px;color:#292929;letter-spacing:0.00px">2</div>
<div class="t" style="left:2988.3px;top:1095.9px;font-size:31.25px;color:#292929;letter-spacing:1.48px">45</div>
<div class="t" style="left:3547.4px;top:1095.9px;font-size:31.25px;color:#292929;letter-spacing:0.00px">8</div>
<div class="t" style="left:199.0px;top:1180.6px;font-size:31.25px;color:#292929;letter-spacing:1.73px">Henry</div>
<div class="t" style="left:745.0px;top:1180.6px;font-size:31.25px;color:#292929;letter-spacing:3.07px">W.</div>
<div class="t" style="left:3546.4px;top:1180.6px;font-size:31.25px;color:#292929;letter-spacing:-2.19px">10</div>
<div class="t" style="left:201.4px;top:1265.3px;font-size:31.25px;color:#292929;letter-spacing:2.44px">Amy</div>
<div class="t" style="left:742.6px;top:1265.3px;font-size:31.25px;color:#292929;letter-spacing:2.55px">D.</div>
<div class="t" style="left:1303.2px;top:1265.3px;font-size:31.25px;color:#292929;letter-spacing:1.78px">2018-03-03</div>
<div class="t" style="left:1864.5px;top:1265.3px;font-size:31.25px;color:#292929;letter-spacing:1.78px">2018-03-03</div>
<div class="t" style="left:2425.2px;top:1265.3px;font-size:31.25px;color:#292929;letter-spacing:0.00px">1</div>
<div class="t" style="left:2988.3px;top:1265.3px;font-size:31.25px;color:#292929;letter-spacing:0.00px">4</div>
<div class="t" style="left:3546.4px;top:1265.3px;font-size:31.25px;color:#292929;letter-spacing:-2.19px">12</div>
<div class="t" style="left:200.4px;top:1350.0px;font-size:31.25px;color:#292929;letter-spacing:1.01px">Steve</div>
<div class="t" style="left:742.6px;top:1350.0px;font-size:31.25px;color:#292929;letter-spacing:3.54px">F.</div>
<div class="t" style="left:3546.4px;top:1350.0px;font-size:31.25px;color:#292929;letter-spacing:-2.19px">14</div>
<div class="t" style="left:201.4px;top:1434.7px;font-size:31.25px;color:#292929;letter-spacing:2.48px">Amanda</div>
<div class="t" style="left:742.6px;top:1434.7px;font-size:31.25px;color:#292929;letter-spacing:2.17px">H.</div>
<div class="t" style="left:1303.2px;top:1434.7px;font-size:31.25px;color:#292929;letter-spacing:1.59px">2018-02-02</div>
<div class="t" style="left:1864.5px;top:1434.7px;font-size:31.25px;color:#292929;letter-spacing:1.59px">2018-02-02</div>
<div class="t" style="left:2425.2px;top:1434.7px;font-size:31.25px;color:#292929;letter-spacing:0.00px">1</div>
<div class="t" style="left:2986.8px;top:1434.7px;font-size:31.25px;color:#292929;letter-spacing:-2.19px">12</div>
<div class="t" style="left:3546.4px;top:1434.7px;font-size:31.25px;color:#292929;letter-spacing:-2.19px">16</div>
<div class="t" style="left:200.9px;top:1519.4px;font-size:31.25px;color:#292929;letter-spacing:1.46px">Johnny</div>
<div class="t" style="left:742.6px;top:1519.4px;font-size:31.25px;color:#292929;letter-spacing:0.92px">K.</div>
<div class="t" style="left:1303.2px;top:1519.4px;font-size:31.25px;color:#292929;letter-spacing:1.19px">2018-02-27</div>
<div class="t" style="left:1864.5px;top:1519.4px;font-size:31.25px;color:#292929;letter-spacing:1.19px">2018-02-27</div>
<div class="t" style="left:2425.2px;top:1519.4px;font-size:31.25px;color:#292929;letter-spacing:0.00px">1</div>
<div class="t" style="left:2987.3px;top:1519.4px;font-size:31.25px;color:#292929;letter-spacing:1.51px">29</div>
<div class="t" style="left:3546.4px;top:1519.4px;font-size:31.25px;color:#292929;letter-spacing:-2.19px">18</div>
<div class="t" style="left:201.4px;top:1604.1px;font-size:31.25px;color:#292929;letter-spacing:1.87px">Anna</div>
<div class="t" style="left:745.0px;top:1604.1px;font-size:31.25px;color:#292929;letter-spacing:1.04px">A.</div>
<div class="t" style="left:1303.2px;top:1604.1px;font-size:31.25px;color:#292929;letter-spacing:0.61px">2018-01-23</div>
<div class="t" style="left:1864.5px;top:1604.1px;font-size:31.25px;color:#292929;letter-spacing:0.61px">2018-01-23</div>
<div class="t" style="left:2425.2px;top:1604.1px;font-size:31.25px;color:#292929;letter-spacing:0.00px">1</div>
<div class="t" style="left:2986.8px;top:1604.1px;font-size:31.25px;color:#292929;letter-spacing:-2.19px">15</div>
<div class="t" style="left:3546.9px;top:1604.1px;font-size:31.25px;color:#292929;letter-spacing:2.16px">20</div>
<div class="t" style="left:200.4px;top:1688.8px;font-size:31.25px;color:#292929;letter-spacing:1.13px">Sean</div>
<div class="t" style="left:742.6px;top:1688.8px;font-size:31.25px;color:#292929;letter-spacing:2.17px">H.</div>
<div class="t" style="left:1303.2px;top:1688.8px;font-size:31.25px;color:#292929;letter-spacing:0.72px">2018-01-26</div>
<div class="t" style="left:1864.5px;top:1688.8px;font-size:31.25px;color:#292929;letter-spacing:0.94px">2018-03-01</div>
<div class="t" style="left:2426.2px;top:1688.8px;font-size:31.25px;color:#292929;letter-spacing:0.00px">3</div>
<div class="t" style="left:2987.8px;top:1688.8px;font-size:31.25px;color:#292929;letter-spacing:0.07px">52</div>
<div class="t" style="left:3546.9px;top:1688.8px;font-size:31.25px;color:#292929;letter-spacing:-0.39px">22</div>
<div class="t" style="left:199.0px;top:1773.5px;font-size:31.25px;color:#292929;letter-spacing:2.55px">David</div>
<div class="t" style="left:743.5px;top:1773.5px;font-size:31.25px;color:#292929;letter-spacing:0.56px">G.</div>
<div class="t" style="left:3546.9px;top:1773.5px;font-size:31.25px;color:#292929;letter-spacing:1.02px">24</div>
<div class="t" style="left:201.4px;top:1858.2px;font-size:31.25px;color:#292929;letter-spacing:2.14px">Aaron</div>
<div class="t" style="left:742.6px;top:1858.2px;font-size:31.25px;color:#292929;letter-spacing:-0.49px">R.</div>
<div class="t" style="left:1303.2px;top:1858.2px;font-size:31.25px;color:#292929;letter-spacing:0.03px">2018-02-11</div>
<div class="t" style="left:1864.5px;top:1858.2px;font-size:31.25px;color:#292929;letter-spacing:1.89px">2018-03-08</div>
<div class="t" style="left:2425.7px;top:1858.2px;font-size:31.25px;color:#292929;letter-spacing:0.00px">2</div>
<div class="t" style="left:2987.8px;top:1858.2px;font-size:31.25px;color:#292929;letter-spacing:0.00px">8</div>
<div class="t" style="left:3546.9px;top:1858.2px;font-size:31.25px;color:#292929;letter-spacing:1.51px">26</div>
</div>
<div style="position:absolute;left:128px;top:1840px;width:3916px;height:104px;background:linear-gradient(rgba(0,0,0,0),rgba(0,0,0,0.03));pointer-events:none"></div><div style="position:absolute;left:0;top:1840px;width:127px;height:104px;background:linear-gradient(rgba(0,0,0,0),rgba(0,0,0,0.012));pointer-events:none"></div>
</body></html>
